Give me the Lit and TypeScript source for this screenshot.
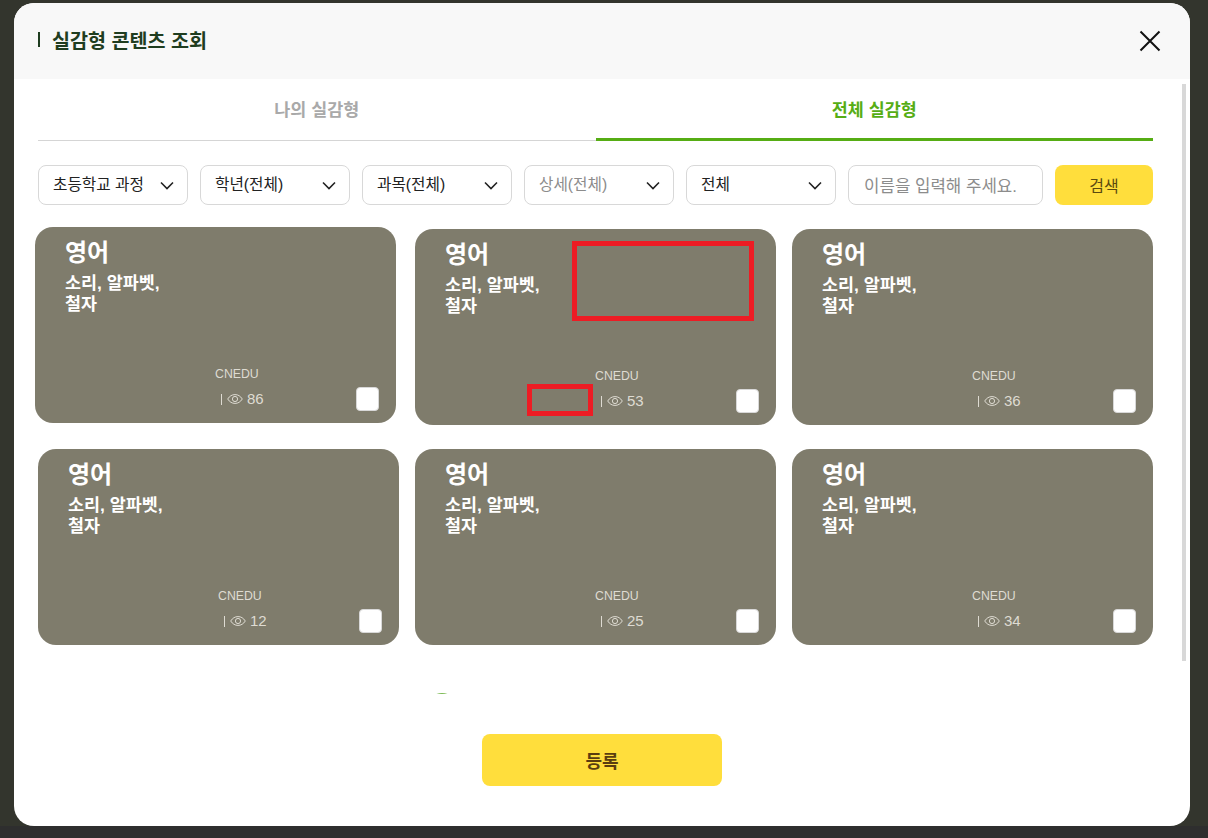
import { LitElement, html, css, svg } from "lit";
import { customElement, state } from "lit/decorators.js";

const chevron = svg`<path d="M1 1.5 7 7.5 13 1.5" fill="none" stroke="#222" stroke-width="1.6"/>`;

@customElement("app-root")
export class AppRoot extends LitElement {
  static styles = css`
    :host {
      display: block;
      width: 1208px;
      height: 838px;
      box-sizing: border-box;
      padding: 3px 18px 12px 14px;
      background: linear-gradient(#33352d 0, #33352d 826px, #2e2e2e 826px);
      font-family: "Liberation Sans", "Noto Sans CJK KR", sans-serif;
      overflow: hidden;
    }
    .modal {
      position: relative;
      height: 823px;
      background: #fff;
      border-radius: 20px;
      overflow: hidden;
      display: flex;
      flex-direction: column;
    }
    .head {
      height: 76px;
      flex: none;
      background: #f8f8f8;
      display: flex;
      align-items: center;
      justify-content: space-between;
      padding: 0 29px 0 24px;
    }
    .title {
      display: flex;
      align-items: center;
      gap: 12px;
      margin-top: -4px;
      font-size: 19.6px;
      font-weight: 700;
      color: #1f3d20;
    }
    .title::before {
      content: "";
      width: 2px;
      height: 15px;
      background: #1f3d20;
    }
    .close {
      display: block;
    }
    .body {
      flex: 1;
      padding: 0 37px 0 24px;
      display: flex;
      flex-direction: column;
    }
    .tabs {
      display: flex;
      height: 62px;
      box-sizing: border-box;
      border-bottom: 1px solid #d5d5d5;
    }
    .tab {
      flex: 1;
      display: flex;
      align-items: center;
      justify-content: center;
      padding-bottom: 2px;
      font-size: 17.4px;
      font-weight: 700;
      color: #a9a9a9;
      box-sizing: border-box;
    }
    .tab.on {
      color: #56ad14;
      border-bottom: 3px solid #56ad14;
      margin-bottom: -1px;
      padding-bottom: 0;
    }
    .filters {
      display: flex;
      gap: 12px;
      margin-top: 24px;
      height: 40px;
    }
    .sel,
    .search {
      box-sizing: border-box;
      height: 40px;
      border: 1px solid #d8d8d8;
      border-radius: 8px;
      background: #fff;
      font-size: 15.7px;
      color: #222;
      display: flex;
      align-items: center;
    }
    .sel {
      width: 150px;
      justify-content: space-between;
      padding: 0 13px 0 14px;
      white-space: nowrap;
    }
    .sel span {
      margin-top: -3px;
    }
    .sel.off {
      color: #8c8c8c;
    }
    .search {
      width: 195px;
      padding-left: 15px;
      font-size: 16.8px;
      color: #8c8c8c;
      white-space: nowrap;
    }
    .go {
      width: 98px;
      height: 40px;
      border-radius: 8px;
      background: #ffde3c;
      font-size: 16px;
      color: #5a4a10;
      display: flex;
      align-items: center;
      justify-content: center;
    }
    .list {
      height: 467px;
      margin: 22px 0 0 -3px;
      padding: 2px 0 0 3px;
      box-sizing: border-box;
      overflow: hidden;
      flex: none;
    }
    .grid {
      display: grid;
      grid-template-columns: repeat(3, 361px);
      gap: 24px 16px;
    }
    .card {
      position: relative;
      height: 196px;
      box-sizing: border-box;
      padding: 10px 0 15px 30px;
      border-radius: 18px;
      background: #7f7c6c;
      color: #fff;
      display: flex;
      flex-direction: column;
    }
    .card.hover {
      transform: translate(-3px, -2px);
    }
    .subject {
      font-size: 24px;
      line-height: 32px;
      font-weight: 700;
    }
    .desc {
      width: 104px;
      margin-top: 4px;
      font-size: 17.4px;
      line-height: 21px;
      font-weight: 700;
    }
    .meta {
      margin-top: auto;
      padding-left: 150px;
      color: #dedbd2;
    }
    .org {
      font-size: 12.3px;
      line-height: 16px;
    }
    .stat {
      display: flex;
      align-items: center;
      margin-top: 8px;
      padding-left: 6px;
      font-size: 15px;
      line-height: 18px;
    }
    .pipe {
      width: 1px;
      height: 11px;
      background: #dedbd2;
      margin-right: 5px;
    }
    .eye {
      margin-right: 4px;
    }
    .check {
      position: absolute;
      right: 17px;
      bottom: 12px;
      width: 23px;
      height: 24px;
      box-sizing: border-box;
      background: #fff;
      border: 1px solid #d8d8d8;
      border-radius: 4px;
    }
    .mark {
      position: absolute;
      box-sizing: border-box;
      border: 5px solid #ed1c24;
    }
    .mark.a {
      left: 157px;
      top: 12px;
      width: 182px;
      height: 80px;
    }
    .mark.b {
      left: 112px;
      top: 155px;
      width: 66px;
      height: 32px;
    }
    .spin {
      width: 30px;
      height: 30px;
      margin: 48px 0 0 389px;
      box-sizing: border-box;
      border: 3px solid #7dbb55;
      border-radius: 50%;
    }
    .foot {
      display: flex;
      justify-content: center;
      margin-top: 40px;
      padding-left: 13px;
    }
    .save {
      width: 240px;
      height: 52px;
      border-radius: 8px;
      background: #ffde3c;
      color: #5a3d10;
      font-size: 18px;
      font-weight: 700;
      display: flex;
      align-items: center;
      justify-content: center;
    }
    .bar {
      position: absolute;
      left: 1168px;
      top: 81px;
      width: 4px;
      height: 577px;
      background: #d8d8d8;
    }
  `;

  @state() views = [86, 53, 36, 12, 25, 34];

  renderCard(n: number, i: number) {
    return html`
      <div class="card ${i === 0 ? "hover" : ""}">
        <div class="subject">영어</div>
        <div class="desc">소리, 알파벳, 철자</div>
        <div class="meta">
          <div class="org">CNEDU</div>
          <div class="stat">
            <span class="pipe"></span>
            <svg class="eye" width="16" height="12" viewBox="0 0 16 12" fill="none" stroke="#dedbd2" stroke-width="1">
              <path d="M.7 6C2.6 3 5 1.6 8 1.6S13.400 3 15.300 6C13.400 9 11 10.400 8 10.400S2.600 9 .7 6Z" />
              <circle cx="8" cy="6" r="2.600" />
            </svg>
            ${n}
          </div>
        </div>
        <div class="check"></div>
        ${i === 1 ? html`<div class="mark a"></div><div class="mark b"></div>` : null}
      </div>
    `;
  }

  render() {
    return html`
      <div class="modal">
        <div class="head">
          <div class="title">실감형 콘텐츠 조회</div>
          <svg class="close" width="22" height="22" viewBox="0 0 22 22">
            <path d="M1.500 1.500 20.500 20.500M20.500 1.500 1.500 20.500" stroke="#111" stroke-width="2" fill="none" />
          </svg>
        </div>
        <div class="body">
          <div class="tabs">
            <div class="tab">나의 실감형</div>
            <div class="tab on">전체 실감형</div>
          </div>
          <div class="filters">
            ${[
              ["초등학교 과정", ""],
              ["학년(전체)", ""],
              ["과목(전체)", ""],
              ["상세(전체)", "off"],
              ["전체", ""],
            ].map(
              ([label, cls]) => html`
                <div class="sel ${cls}">
                  <span>${label}</span>
                  <svg width="14" height="9" viewBox="0 0 14 9">${chevron}</svg>
                </div>
              `
            )}
            <div class="search">이름을 입력해 주세요.</div>
            <div class="go">검색</div>
          </div>
          <div class="list">
            <div class="grid">${this.views.map((n, i) => this.renderCard(n, i))}</div>
            <div class="spin"></div>
          </div>
          <div class="foot"><div class="save">등록</div></div>
        </div>
        <div class="bar"></div>
      </div>
    `;
  }
}
